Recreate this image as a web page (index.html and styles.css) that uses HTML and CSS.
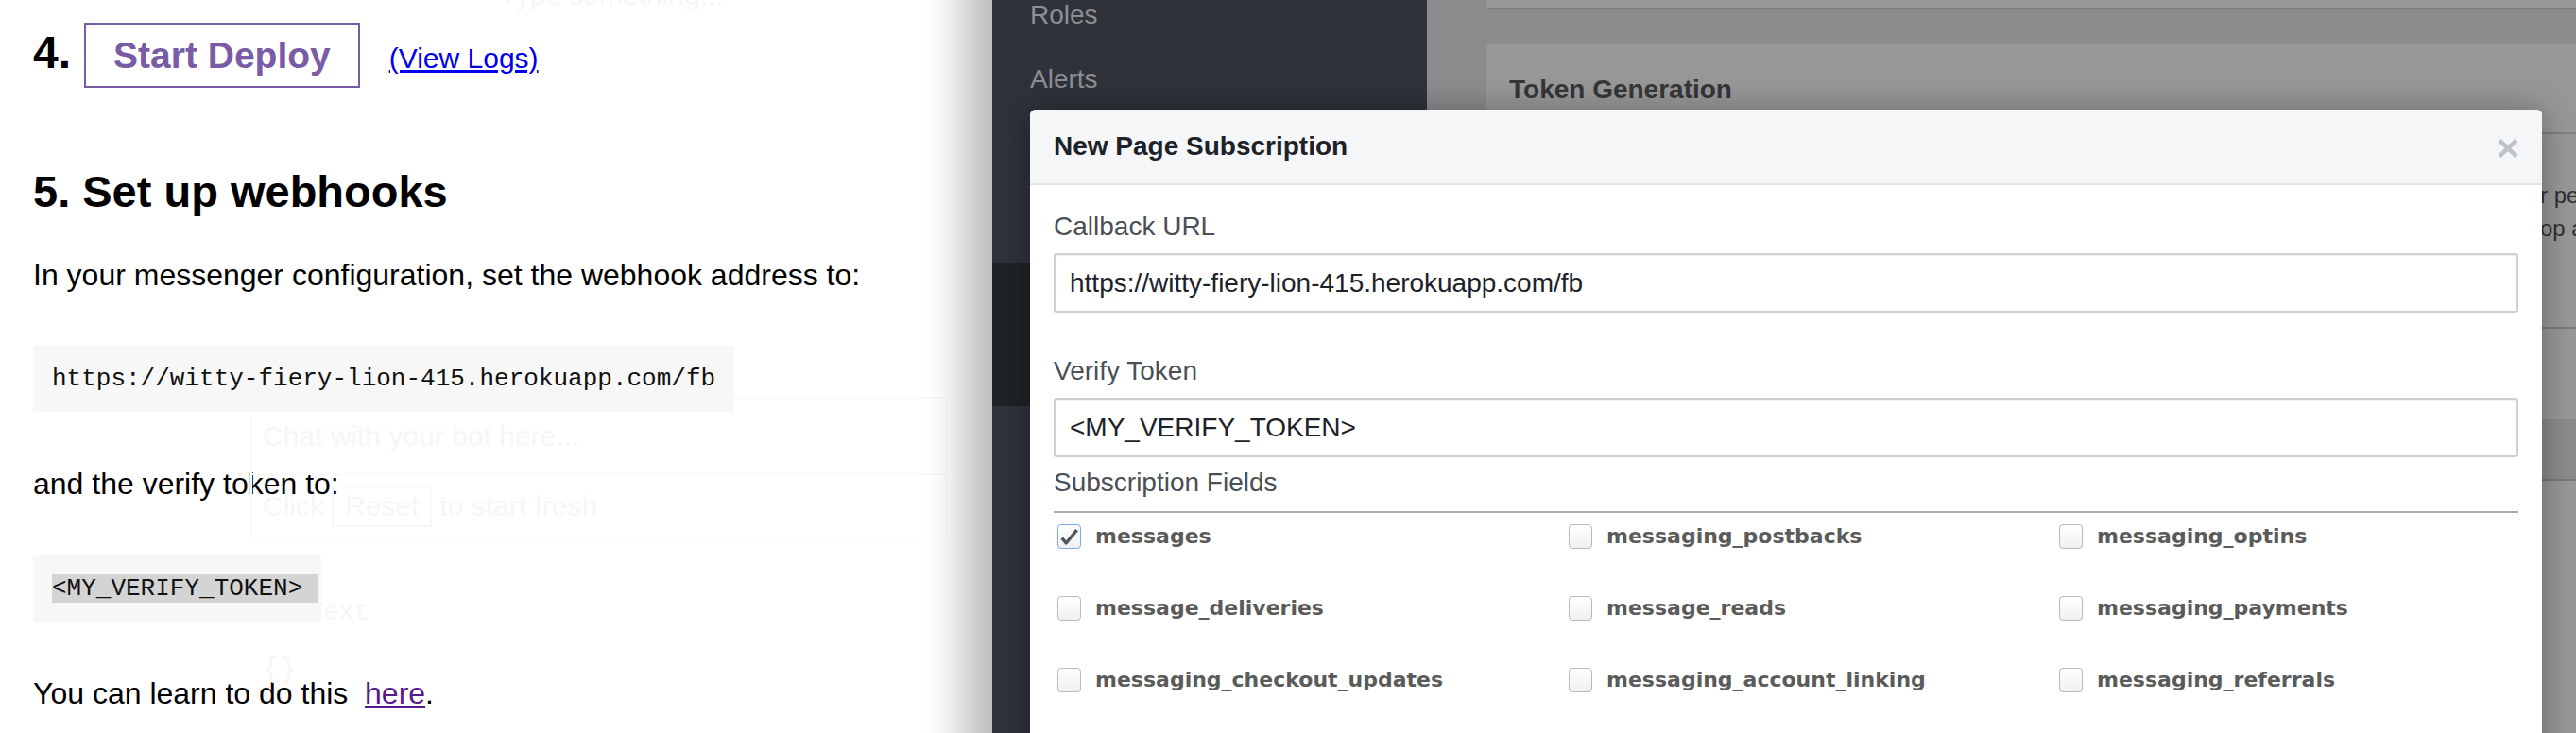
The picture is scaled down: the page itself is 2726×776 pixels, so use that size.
FILE: index.html
```html
<!DOCTYPE html>
<html lang="en">
<head>
<meta charset="utf-8">
<title>Deploy your bot</title>
<link rel="stylesheet" href="styles.css">
</head>
<body>
<div class="left">
  <div class="ghost" aria-hidden="true">
    <div class="g-type">Type something...</div>
    <div class="g-box">
      <div class="g-row g-row1">Chat with your bot here...</div>
      <div class="g-row g-row2"><span>Click</span><span class="g-reset">Reset</span><span>to start fresh</span></div>
    </div>
    <div class="g-text">Text</div>
    <div class="g-json">{}</div>
  </div>

  <div class="step4">
    <span class="num">4.</span>
    <span class="deploy">Start Deploy</span>
    <a class="logs" href="#">(View Logs)</a>
  </div>
  <h2 class="h5">5. Set up webhooks</h2>
  <p class="p p1">In your messenger configuration, set the webhook address to:</p>
  <pre class="code c1">https://witty-fiery-lion-415.herokuapp.com/fb</pre>
  <p class="p p2">and the verify token to:</p>
  <pre class="code c2"><span class="sel">&lt;MY_VERIFY_TOKEN&gt;</span></pre>
  <p class="p p3">You can learn to do this&nbsp; <a class="here" href="#">here</a>.</p>
</div>

<div class="right">
  <nav class="side">
    <div class="side-item first">Roles</div>
    <div class="side-item">Alerts</div>
    <div class="side-gap"></div>
    <div class="side-sel"></div>
  </nav>
  <main class="main">
    <div class="card card1"></div>
    <div class="card card2">
      <div class="card-head">Token Generation</div>
      <div class="card-body">
        <p class="tk-line">r permissions</p>
        <p class="tk-line">op access</p>
      </div>
      <div class="card-sec"></div>
    </div>
    <div class="card card3"></div>
  </main>

  <div class="modal">
    <div class="m-head">
      <span class="m-title">New Page Subscription</span>
      <svg class="m-close" width="22" height="20" viewBox="0 0 22 20"><path d="M2 1.5 L20 18.5 M20 1.5 L2 18.5" stroke="#bec2c9" stroke-width="4.5" stroke-linecap="butt" fill="none"/></svg>
    </div>
    <div class="m-body">
      <div class="f-label">Callback URL</div>
      <div class="f-input">https://witty-fiery-lion-415.herokuapp.com/fb</div>
      <div class="f-label second">Verify Token</div>
      <div class="f-input">&lt;MY_VERIFY_TOKEN&gt;</div>
      <div class="f-label legend">Subscription Fields</div>
      <div class="fields">
        <label class="field"><span class="cb on"><svg width="22" height="23" viewBox="0 0 22 23"><path d="M2.8 12.6 L7.2 18 L18.6 4.2" stroke="#4f5563" stroke-width="3.4" fill="none" stroke-linejoin="round"/></svg></span><span class="f-name">messages</span></label>
        <label class="field"><span class="cb"></span><span class="f-name">messaging_postbacks</span></label>
        <label class="field"><span class="cb"></span><span class="f-name">messaging_optins</span></label>
        <label class="field"><span class="cb"></span><span class="f-name">message_deliveries</span></label>
        <label class="field"><span class="cb"></span><span class="f-name">message_reads</span></label>
        <label class="field"><span class="cb"></span><span class="f-name">messaging_payments</span></label>
        <label class="field"><span class="cb"></span><span class="f-name">messaging_checkout_updates</span></label>
        <label class="field"><span class="cb"></span><span class="f-name">messaging_account_linking</span></label>
        <label class="field"><span class="cb"></span><span class="f-name">messaging_referrals</span></label>
      </div>
    </div>
  </div>
</div>
</body>
</html>
```

FILE: styles.css
```css
* { box-sizing: border-box; }
html, body { margin: 0; padding: 0; }
body {
  width: 2726px;
  height: 776px;
  overflow: hidden;
  display: flex;
  background: #fff;
  font-family: "Liberation Sans", Arial, Helvetica, sans-serif;
}

/* ---------- left page ---------- */
.left {
  position: relative;
  width: 1050px;
  height: 776px;
  flex: none;
  padding: 24px 0 0 35px;
  color: #000;
}
.ghost {
  position: absolute;
  left: 0; top: 0; right: 0; bottom: 0;
  color: #f6f6f6;
  pointer-events: none;
}
.g-type {
  margin: -22px 0 0 529px;
  font-size: 30px;
  line-height: 34px;
  white-space: nowrap;
}
.g-box {
  margin: 408px 0 0 265px;
  width: 737px;
  border: 2px solid #fafafa;
}
.g-row {
  display: flex;
  align-items: center;
  padding-left: 11px;
  font-size: 30px;
  line-height: 34px;
}
.g-row1 { height: 81px; border-bottom: 2px solid #fafafa; }
.g-row2 { height: 65px; gap: 8px; }
.g-reset {
  display: flex;
  align-items: center;
  height: 44px;
  padding: 0 12px;
  border: 2px solid #f8f8f8;
}
.g-text {
  margin: 64px 0 0 326px;
  font-family: "Liberation Mono", monospace;
  font-size: 27px;
  line-height: 30px;
}
.g-json {
  margin: 28px 0 0 278px;
  font-family: "Liberation Mono", monospace;
  font-size: 30px;
  line-height: 34px;
}

.step4 {
  display: flex;
  align-items: baseline;
  gap: 14px;
}
.num { font-size: 48px; line-height: 56px; font-weight: bold; }
.deploy {
  font-size: 39px;
  line-height: 46px;
  font-weight: bold;
  color: #7a5ca6;
  border: 2px solid #7a5ca6;
  padding: 10px 29px 9px;
}
.logs {
  margin-left: 17px;
  font-size: 30px;
  line-height: 36px;
  color: #0000ee;
  text-decoration: underline;
}
.h5 {
  margin: 82px 0 0;
  font-size: 47px;
  line-height: 56px;
  font-weight: bold;
}
.p { margin: 0; font-size: 32px; line-height: 40px; }
.p1 { margin-top: 40px; }
.p2, .p3 { margin-top: 56px; }
.code {
  position: relative;
  width: fit-content;
  margin: 0;
  padding: 20px;
  background: #f7f7f7;
  font-family: "Liberation Mono", "Courier New", monospace;
  font-size: 26px;
  line-height: 30px;
  color: #111;
}
.c1 { margin-top: 55px; }
.c2 { margin-top: 56px; }
.sel {
  background: #d4d4d4;
  padding-right: 16px;
  margin-right: -16px;
}
.here { color: #551a8b; text-decoration: underline; }

/* ---------- right screenshot ---------- */
.right {
  position: relative;
  z-index: 1;
  width: 1676px;
  height: 776px;
  flex: none;
  display: flex;
  background: #8b8c8e;
  box-shadow: 20px 0 40px 50px rgba(0, 0, 0, 0.27);
  overflow: hidden;
}
.side {
  width: 460px;
  flex: none;
  display: flex;
  flex-direction: column;
  background: #2f323a;
}
.side-item {
  flex: none;
  height: 68px;
  line-height: 68px;
  padding-left: 40px;
  font-size: 28px;
  color: #8d8f93;
}
.side-item.first { margin-top: -18px; }
.side-gap { flex: none; height: 160px; }
.side-sel { flex: none; height: 152px; background: #1f2227; }

.main {
  flex: 1;
  display: flex;
  flex-direction: column;
  padding-left: 63px;
}
.card { flex: none; width: 1250px; background: #989898; }
.card1 {
  height: 40px;
  margin-top: -30px;
  border-bottom: 2px solid #7b7b7b;
  border-radius: 0 0 4px 4px;
}
.card2 {
  margin-top: 36px;
  border-top: 1px solid #8e8e8e;
  border-radius: 4px 4px 0 0;
}
.card-head {
  padding: 31px 24px 28px;
  border-bottom: 2px solid #808080;
  font-size: 28px;
  line-height: 34px;
  font-weight: bold;
  color: #353638;
}
.card-body {
  padding: 47px 0 87px;
  border-bottom: 2px solid #7c7c7c;
}
.tk-line {
  margin: 0;
  padding-left: 1115px;
  font-size: 24px;
  line-height: 35px;
  color: #2f3033;
  white-space: nowrap;
}
.card-sec { height: 96px; }
.card3 {
  margin-top: 63px;
  height: 400px;
  border-top: 2px solid #787878;
}

.modal {
  position: absolute;
  left: 40px;
  top: 116px;
  width: 1600px;
  height: 720px;
  background: #fff;
  border-radius: 6px 6px 0 0;
  box-shadow: 0 2px 36px rgba(0, 0, 0, 0.35);
}
.m-head {
  height: 80px;
  padding: 0 25px;
  display: flex;
  align-items: center;
  justify-content: space-between;
  background: #f5f6f7;
  border-bottom: 2px solid #e5e5e5;
  border-radius: 6px 6px 0 0;
}
.m-title {
  font-size: 28px;
  line-height: 34px;
  font-weight: bold;
  color: #1d2129;
}
.m-close { margin-top: 4px; }
.m-body { padding: 27px 25px 0; }
.f-label {
  font-size: 28px;
  line-height: 34px;
  color: #4b4f56;
}
.f-label.second { margin-top: 45px; }
.f-input {
  margin-top: 11px;
  height: 63px;
  padding-left: 15px;
  display: flex;
  align-items: center;
  border: 2px solid #ccd0d5;
  border-radius: 3px;
  box-shadow: inset 0 2px 1px -1px #eceef1;
  font-size: 28px;
  color: #1d2129;
}
.legend {
  margin-top: 10px;
  padding-bottom: 13px;
  border-bottom: 2px solid #aaaaaa;
}
.fields {
  margin-top: 12px;
  display: grid;
  grid-template-columns: 541px 519px 1fr;
  row-gap: 50px;
}
.field {
  height: 26px;
  display: flex;
  align-items: center;
  gap: 15px;
  padding-left: 4px;
}
.cb {
  flex: none;
  width: 25px;
  height: 26px;
  display: flex;
  align-items: center;
  justify-content: center;
  border: 1.5px solid #b9b9b9;
  border-radius: 4px;
  background: linear-gradient(#ffffff, #f0f0f0);
}
.cb.on { border-color: #7ea9ee; }
.f-name {
  font-family: "DejaVu Sans", Verdana, sans-serif;
  font-weight: bold;
  font-size: 22px;
  line-height: 26px;
  color: #5b5b5b;
  white-space: nowrap;
}
```
